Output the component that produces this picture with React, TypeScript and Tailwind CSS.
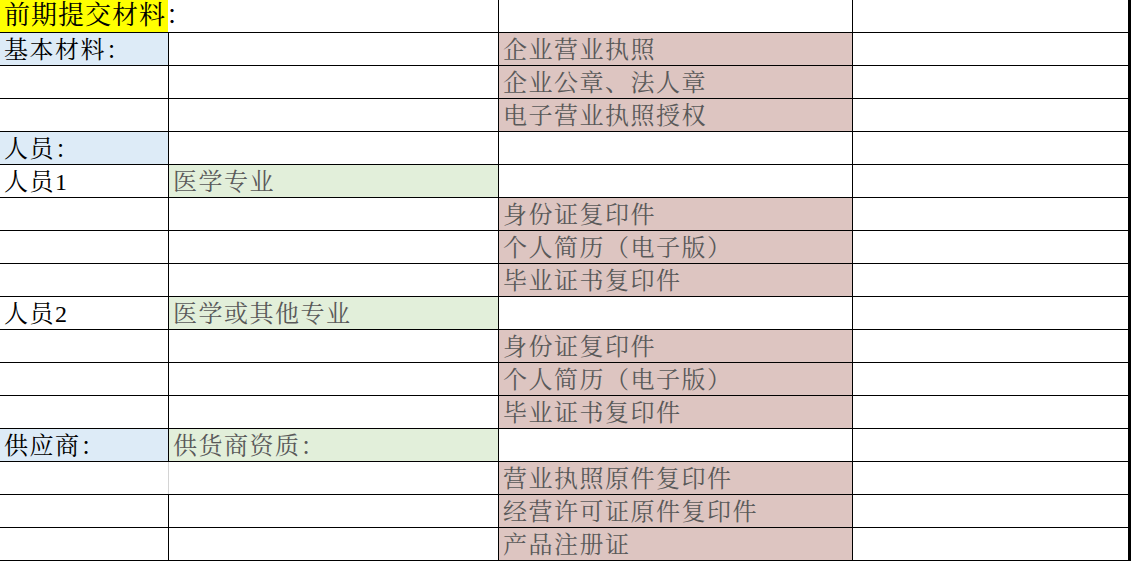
import React from "react";

type Cell = { text?: string; bg?: string; dark?: boolean; softLeft?: boolean };

const BLUE = "bg-[#ddebf7]";
const GREEN = "bg-[#e2efda]";
const PINK = "bg-[#ddc5c1]";

const rows: Cell[][] = [
  [{ text: "基本材料：", bg: BLUE, dark: true }, {}, { text: "企业营业执照", bg: PINK }, {}],
  [{}, {}, { text: "企业公章、法人章", bg: PINK }, {}],
  [{}, {}, { text: "电子营业执照授权", bg: PINK }, {}],
  [{ text: "人员：", bg: BLUE, dark: true }, {}, {}, {}],
  [{ text: "人员1", dark: true }, { text: "医学专业", bg: GREEN }, {}, {}],
  [{}, {}, { text: "身份证复印件", bg: PINK }, {}],
  [{}, {}, { text: "个人简历（电子版）", bg: PINK }, {}],
  [{}, {}, { text: "毕业证书复印件", bg: PINK }, {}],
  [{ text: "人员2", dark: true }, { text: "医学或其他专业", bg: GREEN }, {}, {}],
  [{}, {}, { text: "身份证复印件", bg: PINK }, {}],
  [{}, {}, { text: "个人简历（电子版）", bg: PINK }, {}],
  [{}, {}, { text: "毕业证书复印件", bg: PINK }, {}],
  [{ text: "供应商：", bg: BLUE, dark: true }, { text: "供货商资质：", bg: GREEN }, {}, {}],
  [{}, { softLeft: true }, { text: "营业执照原件复印件", bg: PINK }, {}],
  [{}, {}, { text: "经营许可证原件复印件", bg: PINK }, {}],
  [{}, {}, { text: "产品注册证", bg: PINK }, {}],
];

const font = {
  fontFamily: '"Liberation Serif", "Noto Serif CJK SC", "Noto Sans CJK SC", serif',
};

function Row({ cells }: { cells: Cell[] }) {
  return (
    <div className="grid grid-cols-[168px_330px_354px_1fr] h-[33px] border-b border-black">
      {cells.map((c, i) => (
        <div
          key={i}
          className={[
            "flex items-end pl-[4px] pb-[1px] whitespace-nowrap overflow-hidden text-[24px] leading-[28px] tracking-[1.5px]",
            c.bg ?? "",
            c.dark ? "text-black" : "text-[#595959]",
            i > 0 ? (c.softLeft ? "border-l border-[#d4d4d4]" : "border-l border-black") : "",
          ].join(" ")}
        >
          {c.text}
        </div>
      ))}
    </div>
  );
}

export default function App() {
  return (
    <div className="w-[1132px] h-[562px] bg-white overflow-hidden" style={font}>
      <div className="w-[1131px] border-r-[3px] border-black">
        <div className="grid grid-cols-[168px_330px_354px_1fr] h-[33px] border-b border-black">
          <div className="relative bg-[#ffff00] flex items-end pl-[4px] pb-[1px]">
            <span className="absolute left-[4px] bottom-[1px] whitespace-nowrap text-[26px] leading-[30px] tracking-[1px] text-black">
              前期提交材料：
            </span>
          </div>
          <div />
          <div className="border-l border-black" />
          <div className="border-l border-black" />
        </div>
        {rows.map((r, i) => (
          <Row key={i} cells={r} />
        ))}
      </div>
    </div>
  );
}
